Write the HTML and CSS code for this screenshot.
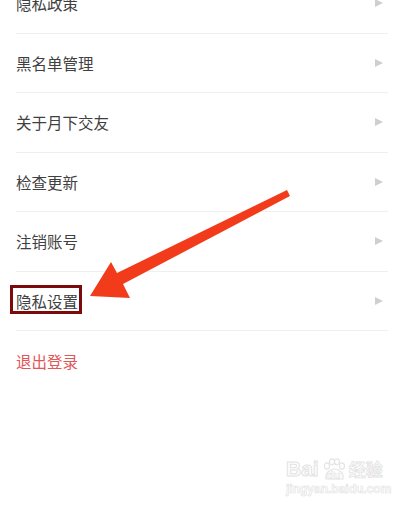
FILE: index.html
```html
<!DOCTYPE html>
<html lang="zh-CN">
<head>
    <meta charset="UTF-8">
    <meta name="viewport" content="width=device-width, initial-scale=1.0">
    <title>设置</title>
    <link rel="stylesheet" href="styles.css">
</head>
<body>
<div class="screen">
    <ul class="menu">
        <li class="menu-item"><span class="label">隐私政策</span><span class="chevron"></span></li>
        <li class="menu-item"><span class="label">黑名单管理</span><span class="chevron"></span></li>
        <li class="menu-item"><span class="label">关于月下交友</span><span class="chevron"></span></li>
        <li class="menu-item"><span class="label">检查更新</span><span class="chevron"></span></li>
        <li class="menu-item"><span class="label">注销账号</span><span class="chevron"></span></li>
        <li class="menu-item"><span class="label highlight">隐私设置</span><span class="chevron"></span></li>
        <li class="menu-item logout"><span class="label">退出登录</span></li>
    </ul>

    <!-- 标注箭头 -->
    <svg class="pointer" width="404" height="510" viewBox="0 0 404 510">
        <polygon points="287,190 290,196 123,284 130,298 90,296 111,262 117,273" fill="#f23b1a"/>
    </svg>

    <div class="watermark">
        <div class="wm-logo">
            <span class="wm-bai">Bai</span>
            <span class="wm-paw">
                <svg width="26" height="24" viewBox="0 0 26 24">
                    <g fill="none" stroke="#e4e4e4" stroke-width="1.2">
                        <ellipse cx="6" cy="8" rx="2.5" ry="3.2"/>
                        <ellipse cx="11" cy="3.8" rx="2.5" ry="3"/>
                        <ellipse cx="16" cy="3.8" rx="2.5" ry="3"/>
                        <ellipse cx="21" cy="8" rx="2.5" ry="3.2"/>
                        <path d="M5 21 C4 15 9 11 13.5 11 C18 11 23 15 22 21 Z"/>
                    </g>
                </svg>
                <span class="wm-du">du</span>
            </span>
            <span class="wm-jy">经验</span>
        </div>
        <div class="wm-url">jingyan.baidu.com</div>
    </div>
</div>
</body>
</html>
```

FILE: styles.css
```css
body {
    margin: 0;
    background-color: #fff;
    font-family: "Noto Sans CJK SC", "Noto Sans", sans-serif;
}
.screen {
    position: relative;
    width: 404px;
    height: 510px;
    overflow: hidden;
}
.menu {
    list-style: none;
    margin: -26px 16px 0 16px;
    padding: 0;
}
.menu-item {
    display: flex;
    align-items: center;
    justify-content: space-between;
    height: 59.5px;
    box-sizing: border-box;
    border-bottom: 1px solid #efefef;
    font-size: 15.5px;
    color: #404040;
}
.menu-item.logout {
    border-bottom: none;
    color: #e0575a;
}
.label {
    line-height: 20px;
}
.highlight {
    border: 3px solid #7c0a0a;
    line-height: 19px;
    padding: 4px 1px 0 3px;
    margin-left: -6px;
    position: relative;
    top: -1px;
}
.chevron {
    width: 0;
    height: 0;
    margin-right: 5px;
    border-top: 4.5px solid transparent;
    border-bottom: 4.5px solid transparent;
    border-left: 8px solid #cfcfcf;
}
.pointer {
    position: absolute;
    top: 0;
    left: 0;
}
.watermark {
    position: absolute;
    left: 286px;
    top: 458px;
    color: #ececec;
    font-family: "Liberation Sans", Arial, sans-serif;
}
.wm-logo {
    display: flex;
    align-items: flex-end;
}
.wm-bai {
    font-size: 21px;
    font-weight: bold;
    line-height: 22px;
    color: #fff;
    -webkit-text-stroke: 1px #e2e2e2;
}
.wm-paw {
    display: flex;
    flex-direction: column;
    align-items: center;
    margin: 0 2px;
}
.wm-du {
    font-size: 11px;
    font-weight: bold;
    line-height: 10px;
    margin-top: -12px;
    color: #fff;
    -webkit-text-stroke: 0.6px #e2e2e2;
}
.wm-jy {
    font-family: "Noto Sans CJK SC", sans-serif;
    font-size: 17px;
    font-weight: bold;
    line-height: 22px;
    color: #fff;
    -webkit-text-stroke: 0.8px #e2e2e2;
}
.wm-url {
    font-size: 12px;
    font-weight: bold;
    margin-top: 2px;
    color: #fff;
    -webkit-text-stroke: 0.6px #e2e2e2;
}
```
